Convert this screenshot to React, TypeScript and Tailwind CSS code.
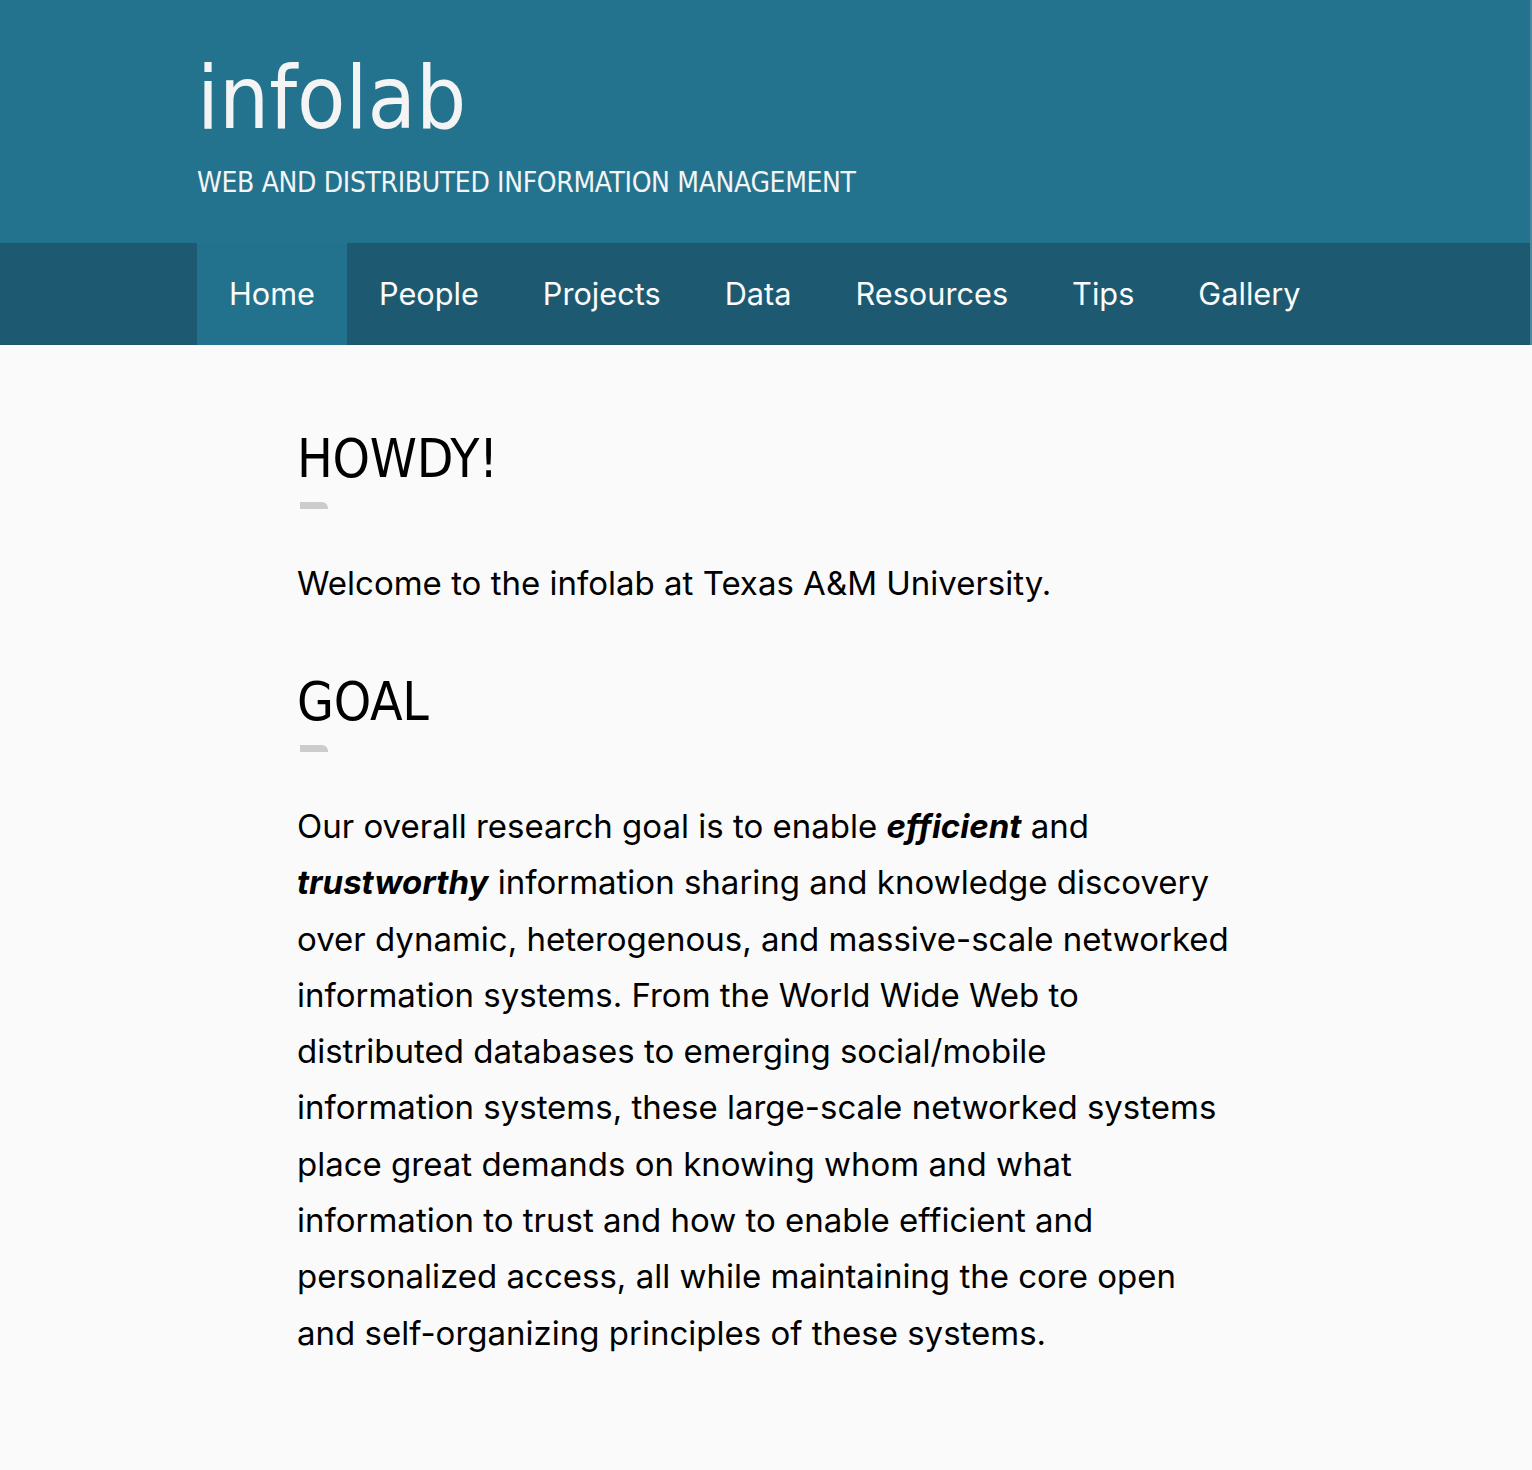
import React from "react";

const navItems = ["Home", "People", "Projects", "Data", "Resources", "Tips", "Gallery"];

const headFont = "font-['DejaVu_Sans_Condensed','Liberation_Sans',sans-serif]";

const SectionTitle: React.FC<{ children: React.ReactNode }> = ({ children }) => (
  <div>
    <h2 className={`${headFont} text-[53px] leading-[66px] tracking-[-0.3px] text-black`}>{children}</h2>
    <div className="mt-[10px] ml-[3px] h-[7px] w-[28px] rounded-tr-[6px] bg-[#cccccc]" />
  </div>
);

export default function App() {
  return (
    <div className="min-h-[1470px] bg-[#fafafa] font-['Inter',sans-serif] text-black">
      <header className="border-r-2 border-[#4d8aa0]">
        <div className="bg-[#23738f] px-[197px] pt-[46px] pb-[42px]">
          <div className={`${headFont} text-[88px] font-light leading-[104px] text-[#f4f4f4]`}>
            infolab
          </div>
          <div className={`${headFont} mt-[15px] text-[28px] leading-[36px] tracking-[-0.35px] text-[#f4f4f4]`}>
            WEB AND DISTRIBUTED INFORMATION MANAGEMENT
          </div>
        </div>
        <nav className="flex h-[102px] bg-[#1d5a71] px-[197px]">
          {navItems.map((item, i) => (
            <a
              key={item}
              href="#"
              className={
                "flex items-center px-[32px] text-[30.7px] text-[#fbfbfb] " +
                (i === 0 ? "bg-[#22718d]" : "")
              }
            >
              {item}
            </a>
          ))}
        </nav>
      </header>

      <main className="w-[933px] pl-[297px] box-content pt-[81px]">
        <SectionTitle>HOWDY!</SectionTitle>
        <p className="mt-[46px] text-[33px] leading-[56px]">
          Welcome to the infolab at Texas A&amp;M University.
        </p>
        <div className="mt-[58px]">
          <SectionTitle>GOAL</SectionTitle>
        </div>
        <p className="mt-[46px] text-[33px] leading-[56.3px]">
          Our overall research goal is to enable <b className="font-bold italic">efficient</b> and{" "}
          <b className="font-bold italic">trustworthy</b> information sharing and knowledge discovery over
          dynamic, heterogenous, and massive-scale networked information systems. From the World Wide Web
          to distributed databases to emerging social/mobile information systems, these large-scale
          networked systems place great demands on knowing whom and what information to trust and how to
          enable efficient and personalized access, all while maintaining the core open and
          self-organizing principles of these systems.
        </p>
      </main>
    </div>
  );
}
